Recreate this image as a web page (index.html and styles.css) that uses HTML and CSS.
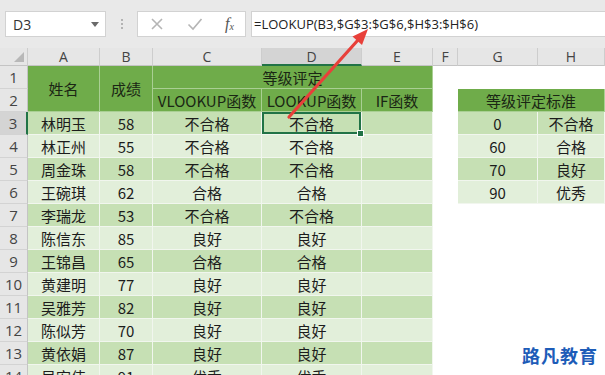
FILE: index.html
```html
<!DOCTYPE html>
<html lang="zh-CN">
<head>
    <meta charset="UTF-8">
    <title>等级评定</title>
    <link rel="stylesheet" href="styles.css">
</head>
<body>
    <div class="toolbar">
        <div class="name-box">
            <span>D3</span>
            <span class="caret"></span>
        </div>
        <div class="grip"><i></i><i></i><i></i></div>
        <div class="fx-buttons">
            <svg class="btn-icon" width="14" height="14" viewBox="0 0 14 14">
                <path d="M2 2 L12 12 M12 2 L2 12" stroke="#b5b5b5" stroke-width="1.6" fill="none"/>
            </svg>
            <svg class="btn-icon" width="16" height="14" viewBox="0 0 16 14">
                <path d="M1.5 7.5 L6 12 L14.5 2" stroke="#b5b5b5" stroke-width="1.6" fill="none"/>
            </svg>
            <span class="fx">f<sub>x</sub></span>
        </div>
        <div class="formula">=LOOKUP(B3,$G$3:$G$6,$H$3:$H$6)</div>
    </div>

    <div class="sheet">
        <div class="col-head corner"><span class="corner-mark"></span></div>
        <div class="col-head">A</div>
        <div class="col-head">B</div>
        <div class="col-head">C</div>
        <div class="col-head active">D</div>
        <div class="col-head">E</div>
        <div class="col-head">F</div>
        <div class="col-head">G</div>
        <div class="col-head">H</div>

        <div class="rn">1</div>
        <div class="c hd tall">姓名</div>
        <div class="c hd tall">成绩</div>
        <div class="c hd wide">等级评定</div>

        <div class="rn">2</div>
        <div class="c hd">VLOOKUP函数</div>
        <div class="c hd">LOOKUP函数</div>
        <div class="c hd">IF函数</div>
        <div class="c hd g pair">等级评定标准</div>

        <div class="rn active">3</div>
        <div class="c m">林明玉</div>
        <div class="c m">58</div>
        <div class="c m">不合格</div>
        <div class="c m selected">不合格</div>
        <div class="c m"></div>
        <div class="c m g">0</div>
        <div class="c m">不合格</div>

        <div class="rn">4</div>
        <div class="c l">林正州</div>
        <div class="c l">55</div>
        <div class="c l">不合格</div>
        <div class="c l">不合格</div>
        <div class="c l"></div>
        <div class="c l g">60</div>
        <div class="c l">合格</div>

        <div class="rn">5</div>
        <div class="c m">周金珠</div>
        <div class="c m">58</div>
        <div class="c m">不合格</div>
        <div class="c m">不合格</div>
        <div class="c m"></div>
        <div class="c m g">70</div>
        <div class="c m">良好</div>

        <div class="rn">6</div>
        <div class="c l">王碗琪</div>
        <div class="c l">62</div>
        <div class="c l">合格</div>
        <div class="c l">合格</div>
        <div class="c l"></div>
        <div class="c l g">90</div>
        <div class="c l">优秀</div>

        <div class="rn">7</div>
        <div class="c m">李瑞龙</div>
        <div class="c m">53</div>
        <div class="c m">不合格</div>
        <div class="c m">不合格</div>
        <div class="c m"></div>

        <div class="rn">8</div>
        <div class="c l">陈信东</div>
        <div class="c l">85</div>
        <div class="c l">良好</div>
        <div class="c l">良好</div>
        <div class="c l"></div>

        <div class="rn">9</div>
        <div class="c m">王锦昌</div>
        <div class="c m">65</div>
        <div class="c m">合格</div>
        <div class="c m">合格</div>
        <div class="c m"></div>

        <div class="rn">10</div>
        <div class="c l">黄建明</div>
        <div class="c l">77</div>
        <div class="c l">良好</div>
        <div class="c l">良好</div>
        <div class="c l"></div>

        <div class="rn">11</div>
        <div class="c m">吴雅芳</div>
        <div class="c m">82</div>
        <div class="c m">良好</div>
        <div class="c m">良好</div>
        <div class="c m"></div>

        <div class="rn">12</div>
        <div class="c l">陈似芳</div>
        <div class="c l">70</div>
        <div class="c l">良好</div>
        <div class="c l">良好</div>
        <div class="c l"></div>

        <div class="rn">13</div>
        <div class="c m">黄依娟</div>
        <div class="c m">87</div>
        <div class="c m">良好</div>
        <div class="c m">良好</div>
        <div class="c m"></div>

        <div class="rn">14</div>
        <div class="c l">吴宏伟</div>
        <div class="c l">91</div>
        <div class="c l">优秀</div>
        <div class="c l">优秀</div>
        <div class="c l"></div>
    </div>

    <!-- arrow pointing at the absolute reference in the formula -->
    <svg class="arrow" width="605" height="375" viewBox="0 0 605 375">
        <path d="M289 117 L358 40" stroke="#e8403a" stroke-width="3.2" stroke-linecap="round" fill="none"/>
        <polygon points="368,29 362,45 352.5,36.5" fill="#e8403a"/>
    </svg>

    <div class="watermark">路凡教育</div>
</body>
</html>
```

FILE: styles.css
```css
body {
    margin: 0;
    width: 605px;
    height: 375px;
    overflow: hidden;
    position: relative;
    background-color: #fff;
    font-family: "Noto Sans CJK SC", sans-serif;
    color: #1c1c1c;
}

/* formula bar */
.toolbar {
    display: flex;
    align-items: center;
    height: 48px;
    padding-left: 5px;
    background-color: #e9e9e9;
    box-sizing: border-box;
}

.name-box {
    width: 101px;
    height: 26px;
    display: flex;
    align-items: center;
    justify-content: space-between;
    padding: 0 6px 0 7px;
    background-color: #fff;
    border: 1px solid #d2d2d2;
    box-sizing: border-box;
    font-family: "Open Sans", sans-serif;
    font-size: 14px;
    color: #333;
}

.caret {
    width: 0;
    height: 0;
    border-left: 4px solid transparent;
    border-right: 4px solid transparent;
    border-top: 5px solid #6a6a6a;
}

.grip {
    width: 31px;
    display: flex;
    flex-direction: column;
    align-items: center;
    gap: 2px;
}

.grip i {
    width: 2px;
    height: 2px;
    background-color: #b3b3b3;
}

.fx-buttons {
    width: 109px;
    height: 26px;
    display: flex;
    align-items: center;
    justify-content: space-between;
    padding: 0 11px 0 12px;
    background-color: #fff;
    border: 1px solid #d2d2d2;
    box-sizing: border-box;
}

.fx {
    font-family: "Liberation Serif", serif;
    font-style: italic;
    font-size: 16px;
    color: #555;
    line-height: 1;
}

.fx sub {
    font-size: 10px;
    vertical-align: -1px;
}

.formula {
    flex: 1;
    height: 26px;
    margin-left: 5px;
    padding-left: 2px;
    display: flex;
    align-items: center;
    background-color: #fff;
    border: 1px solid #d2d2d2;
    border-right: none;
    box-sizing: border-box;
    font-family: "Open Sans", sans-serif;
    font-size: 13px;
    color: #222;
}

/* grid */
.sheet {
    display: grid;
    grid-template-columns: 28px 72px 53px 109px 100px 71px 25px 80px 67px;
    grid-template-rows: 18px repeat(14, 23px);
}

.col-head {
    display: flex;
    align-items: center;
    justify-content: center;
    background-color: #e6e6e6;
    border-right: 1px solid #cdcdcd;
    border-bottom: 1px solid #c4c4c4;
    box-sizing: border-box;
    font-family: "Open Sans", sans-serif;
    font-size: 14px;
    color: #444;
}

.col-head.active {
    background-color: #d4d4d4;
    border-bottom: 2px solid #217346;
}

.corner {
    position: relative;
}

.corner-mark {
    position: absolute;
    right: 3px;
    bottom: 3px;
    width: 0;
    height: 0;
    border-left: 10px solid transparent;
    border-bottom: 10px solid #b8b8b8;
}

.rn {
    grid-column: 1;
    display: flex;
    align-items: center;
    justify-content: center;
    background-color: #e6e6e6;
    border-right: 1px solid #c4c4c4;
    border-bottom: 1px solid #d3d3d3;
    box-sizing: border-box;
    font-family: "Open Sans", sans-serif;
    font-size: 15px;
    color: #444;
}

.rn.active {
    background-color: #d4d4d4;
    border-right: 2px solid #217346;
}

.c {
    display: flex;
    align-items: center;
    justify-content: center;
    border-right: 1px solid #f1f6ee;
    border-bottom: 1px solid #f1f6ee;
    box-sizing: border-box;
    font-size: 15px;
    white-space: nowrap;
    overflow: hidden;
}

.hd {
    background-color: #6fac4a;
    border-color: #a9cf93;
    color: #1a2614;
}

.m {
    background-color: #c6e0b4;
}

.l {
    background-color: #e2efda;
}

.tall {
    grid-row: span 2;
}

.wide {
    grid-column: span 3;
}

.g {
    grid-column: 8;
}

.pair {
    grid-column: 8 / span 2;
}

.selected {
    position: relative;
    overflow: visible;
    box-shadow: inset 0 0 0 2px #217346;
}

.selected::after {
    content: "";
    position: absolute;
    right: -3px;
    bottom: -3px;
    width: 5px;
    height: 5px;
    background-color: #217346;
    border: 1px solid #fff;
}

.arrow {
    position: absolute;
    top: 0;
    left: 0;
    pointer-events: none;
}

.watermark {
    position: absolute;
    left: 522px;
    top: 342px;
    font-size: 18px;
    font-weight: bold;
    color: #1d5cb8;
    letter-spacing: 1px;
}
```
